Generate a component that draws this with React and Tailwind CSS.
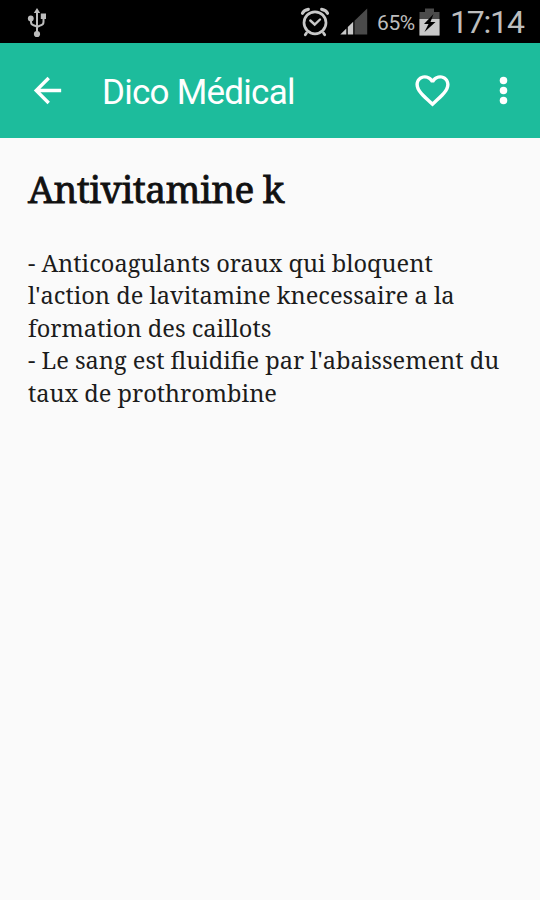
import React from 'react';

const definition = [
  '- Anticoagulants oraux qui bloquent',
  "l'action de lavitamine knecessaire a la",
  'formation des caillots',
  "- Le sang est fluidifie par l'abaissement du",
  'taux de prothrombine',
];

const UsbIcon = () => (
  <svg className="w-[20px] h-[32px]" viewBox="0 0 20 32" fill="none" stroke="#bdbdbd" strokeWidth="2">
    <path d="M10 5V27M4 12v4q0 2.500 2.500 3.200l3.500 1.300M16.500 10v6q0 2.500-2.500 3.200l-4 1.800" />
    <circle cx="10" cy="28" r="3.100" fill="#bdbdbd" stroke="none" />
    <circle cx="3.800" cy="12.500" r="2.900" fill="#bdbdbd" stroke="none" />
    <path d="M13.800 7.500h5.200v5.400h-5.200zM10 2l3.200 5H6.800z" fill="#bdbdbd" stroke="none" />
  </svg>
);

const AlarmIcon = () => (
  <svg className="w-[30px] h-[30px]" viewBox="0 0 30 30" fill="none" stroke="#c8c8c8" strokeLinecap="round">
    <circle cx="15" cy="15.800" r="11" strokeWidth="2.700" />
    <path d="M10.300 13.500l4.400 4 5.300-5" strokeWidth="2.400" />
    <path d="M2.500 6.300Q3.700 3 8.300 2.300M27.500 6.300Q26.300 3 21.700 2.300" strokeWidth="3.200" />
    <path d="M6.500 26l-1.200 1.800M23.500 26l1.200 1.800" strokeWidth="2.800" />
  </svg>
);

const SignalIcon = () => (
  <svg className="w-[28px] h-[27px]" viewBox="0 0 28 27">
    <path d="M14.500 26.500V12.700L27.200 0.500v26z" fill="#4a4a4a" />
    <path d="M0.300 26.500L6.300 20.500v6z" fill="#c8c8c8" />
    <path d="M7.800 26.500v-7.600l5.400-5.200v12.800z" fill="#c8c8c8" />
  </svg>
);

const BatteryIcon = () => (
  <svg className="w-[21px] h-[28px]" viewBox="0 0 21 28">
    <path d="M0.500 4h5.500V0.500h9V4h5.500v23.500h-20z" fill="#4b4b4b" />
    <path d="M0.500 11h20v16.500h-20z" fill="#c8c8c8" />
    <path d="M14.500 6L5 16h4.500L5.500 24 16.500 14H11.500z" fill="#000" />
  </svg>
);

const StatusBar = () => (
  <div className="h-[43px] bg-black flex items-center text-[#bdbdbd] pl-[27px]">
    <UsbIcon />
    <div className="ml-[253px] mt-px"><AlarmIcon /></div>
    <div className="ml-[10px]"><SignalIcon /></div>
    <span className="ml-[9px] w-[43px] mt-[3px] text-[21px] leading-none tracking-[-0.400px] whitespace-nowrap">65%</span>
    <div className="-ml-px"><BatteryIcon /></div>
    <span className="ml-[10px] text-[32px] leading-none tracking-[-1.200px]">17:14</span>
  </div>
);

const ActionBar = () => (
  <header className="h-[95px] bg-[#1dbc9c] flex items-center text-white pl-[27px] pr-[16px]">
    <svg className="w-[41px] h-[41px] shrink-0" viewBox="0 0 24 24" fill="currentColor">
      <path d="M20 11H7.830l5.590-5.590L12 4l-8 8 8 8 1.410-1.410L7.830 13H20v-2z" />
    </svg>
    <h1 className="ml-[34px] mt-[3px] text-[35px] tracking-[-0.750px] leading-none flex-1 whitespace-nowrap">Dico Médical</h1>
    <svg className="w-[41px] h-[41px]" viewBox="0 0 24 24" fill="currentColor">
      <path d="M16.500 3c-1.740 0-3.410.81-4.500 2.090C10.910 3.810 9.240 3 7.500 3 4.420 3 2 5.420 2 8.500c0 3.780 3.400 6.860 8.550 11.540L12 21.350l1.450-1.320C18.600 15.360 22 12.280 22 8.500 22 5.420 19.580 3 16.500 3zm-4.400 15.550l-.1.100-.1-.1C7.140 14.240 4 11.390 4 8.500 4 6.500 5.500 5 7.500 5c1.540 0 3.040.99 3.570 2.360h1.870C13.460 5.990 14.960 5 16.500 5c2 0 3.500 1.500 3.500 3.500 0 2.890-3.140 5.740-7.900 10.050z" />
    </svg>
    <svg className="ml-[30px] w-[41px] h-[41px]" viewBox="0 0 24 24" fill="currentColor">
      <circle cx="12" cy="6.200" r="2.200" />
      <circle cx="12" cy="12" r="2.200" />
      <circle cx="12" cy="17.800" r="2.200" />
    </svg>
  </header>
);

const App = () => {
  return (
    <div className="w-[540px] h-[900px] bg-[#fafafa] overflow-hidden font-['Roboto',sans-serif]">
      <StatusBar />
      <ActionBar />
      <main className="px-[28px] pt-[27px] text-[#1c1c1c] font-['Noto_Serif','Droid_Serif','DejaVu_Serif',serif]">
        <h2 className="text-[37px] leading-[48px] tracking-[-0.550px] text-[#111] whitespace-nowrap [-webkit-text-stroke:0.800px_#111]">Antivitamine k</h2>
        <div className="mt-[33.500px] text-[23.600px] leading-[32.600px]">
          {definition.map((line) => (
            <p key={line} className="whitespace-nowrap">{line}</p>
          ))}
        </div>
      </main>
    </div>
  );
};

export default App;
